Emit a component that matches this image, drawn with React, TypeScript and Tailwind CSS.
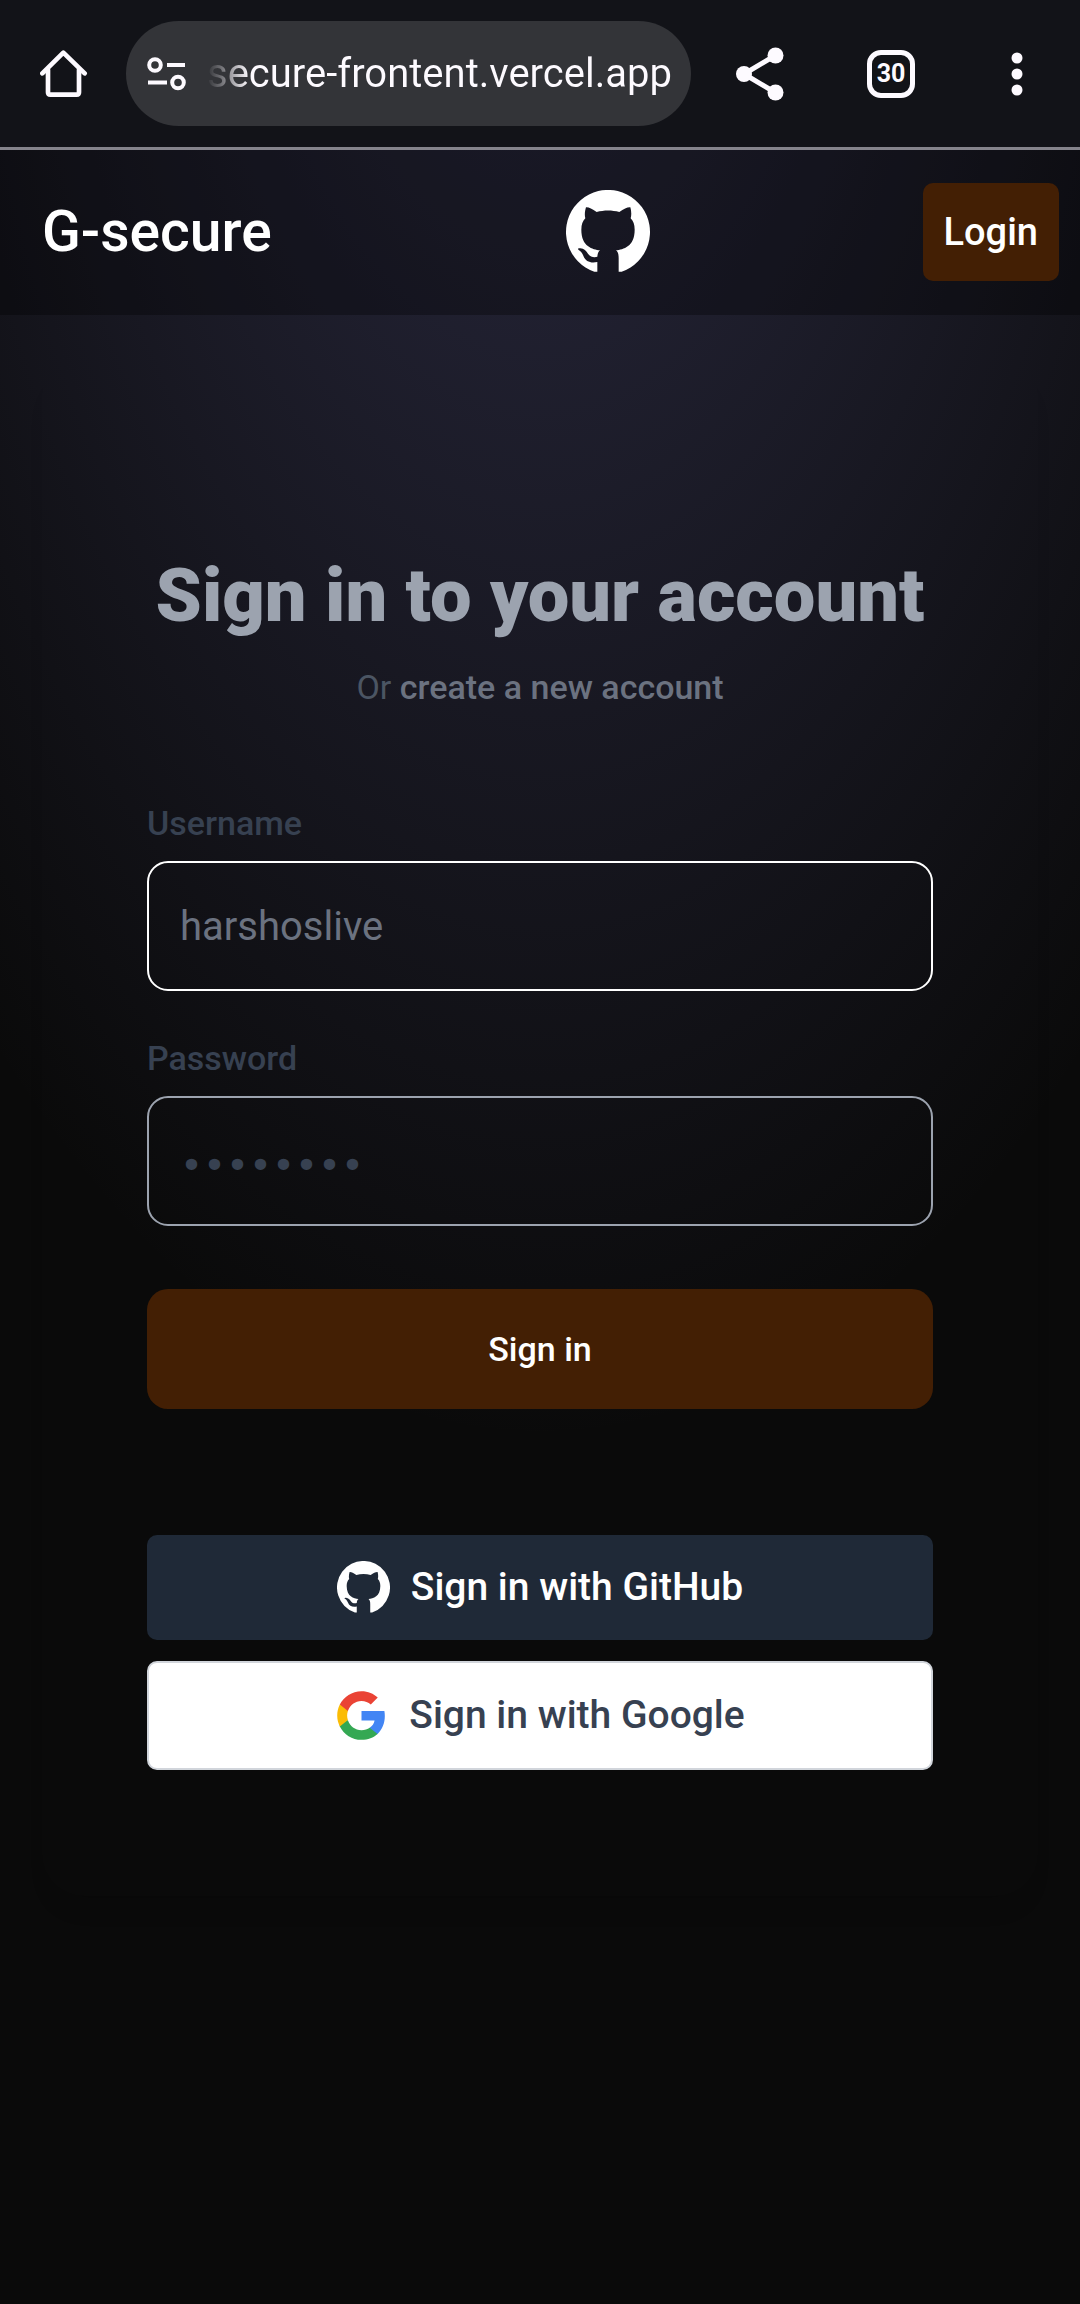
function HomeIcon() {
  return (
    <svg viewBox="30 29 144 144" className="size-12" fill="none" stroke="#fdfaff" strokeWidth="14" strokeLinecap="round" strokeLinejoin="round" aria-hidden="true">
      <path d="M37 99 100 37l64 62" />
      <path d="M54 88v68q0 7 7 7h79q7 0 7-7V88" />
    </svg>
  );
}

function TuneIcon() {
  return (
    <svg viewBox="0 0 40 34" className="h-[34px] w-10 shrink-0" fill="none" stroke="#fdfaff" strokeWidth="4" aria-hidden="true">
      <circle cx="8" cy="8" r="5.800" />
      <path d="M20 8h18M1 25.500h19" />
      <circle cx="31" cy="25.500" r="5.800" />
    </svg>
  );
}

function ShareIcon() {
  return (
    <svg viewBox="0 0 48 54" className="h-[54px] w-12" fill="#fdfaff" stroke="#fdfaff" aria-hidden="true">
      <path d="M40 8 8 27l32 19" fill="none" strokeWidth="5" />
      <circle cx="8" cy="27" r="8" stroke="none" />
      <circle cx="39.500" cy="8.500" r="8" stroke="none" />
      <circle cx="39.500" cy="45.500" r="8" stroke="none" />
    </svg>
  );
}

function MoreIcon() {
  return (
    <svg viewBox="0 0 12 44" className="h-11 w-3" fill="#fdfaff" aria-hidden="true">
      <circle cx="6" cy="6" r="5.500" />
      <circle cx="6" cy="22" r="5.500" />
      <circle cx="6" cy="38" r="5.500" />
    </svg>
  );
}

function GitHubMark({ className }: { className: string }) {
  return (
    <svg viewBox="18 17 252 252" className={className} fill="currentColor" aria-hidden="true">
      <path d="M112 262H103A126 126 0 1 1 185 262H176V222C176 210 174 203 168 198C190 195 224 187 224 136C224 120 220 110 212 102C215 92 214 79 211 69C203 68 192 73 178 83C156 77 132 77 110 83C96 73 85 68 78 69C75 79 73 92 76 102C68 110 64 120 64 136C64 187 98 195 120 198C115 202 113 207 112 217C104 220 91 219 84 208C79 200 72 193 61 192C53 191 52 195 57 198C63 201 67 208 70 214C77 232 92 237 112 233Z" />
    </svg>
  );
}

function GoogleIcon() {
  return (
    <svg viewBox="0 0 24 24" className="size-[53px]" aria-hidden="true">
      <path fill="#4285F4" d="M22.560 12.250c0-.78-.07-1.530-.2-2.250H12v4.260h5.920c-.26 1.370-1.040 2.530-2.210 3.310v2.770h3.570c2.080-1.920 3.280-4.740 3.280-8.090z" />
      <path fill="#34A853" d="M12 23c2.970 0 5.460-.98 7.280-2.660l-3.570-2.770c-.98.66-2.230 1.060-3.710 1.060-2.860 0-5.290-1.930-6.160-4.530H2.180v2.840C3.990 20.530 7.700 23 12 23z" />
      <path fill="#FBBC05" d="M5.840 14.090c-.22-.66-.35-1.360-.35-2.090s.13-1.430.35-2.090V7.070H2.180C1.430 8.550 1 10.220 1 12s.43 3.450 1.180 4.930l2.850-2.220.81-.62z" />
      <path fill="#EA4335" d="M12 5.380c1.620 0 3.060.56 4.210 1.640l3.150-3.150C17.450 2.090 14.970 1 12 1 7.700 1 3.990 3.470 2.180 7.070l3.660 2.840c.87-2.600 3.300-4.530 6.160-4.530z" />
    </svg>
  );
}

function BrowserBar() {
  return (
    <header className="flex h-[150px] items-center border-b-[3px] border-[#85848c] bg-[#121318] pr-[57px] pl-10">
      <button type="button" aria-label="Home">
        <HomeIcon />
      </button>
      <div className="ml-[38px] flex h-[105px] min-w-0 flex-1 items-center rounded-full bg-[#333438] pr-4 pl-[21px]">
        <button type="button" aria-label="Site settings">
          <TuneIcon />
        </button>
        <span className="ml-5 bg-linear-to-r from-[#333438] to-[#fdfaff] to-[9%] bg-clip-text text-[40px] whitespace-nowrap text-transparent">
          secure-frontent.vercel.app
        </span>
      </div>
      <button type="button" aria-label="Share" className="ml-[45px]">
        <ShareIcon />
      </button>
      <button
        type="button"
        aria-label="Open tabs"
        className="ml-[83px] flex size-12 items-center justify-center rounded-[14px] border-[5px] border-[#fdfaff] text-[25px] font-bold text-[#fdfaff]"
      >
        30
      </button>
      <button type="button" aria-label="More" className="ml-[96px]">
        <MoreIcon />
      </button>
    </header>
  );
}

function NavBar() {
  return (
    <nav className="flex h-[165px] items-center justify-between bg-black/30 pr-[21px] pb-px pl-[42px] text-white">
      <a href="#home" className="text-[57px] font-medium">
        G-secure
      </a>
      <a href="#github" aria-label="GitHub" className="pl-[21px]">
        <GitHubMark className="size-[84px]" />
      </a>
      <a
        href="#login"
        className="flex h-[98px] items-center rounded-[10px] bg-[#431f04] px-[21px] text-[38px] font-medium"
      >
        Login
      </a>
    </nav>
  );
}

function Field({ id, label, type, placeholder, className }: { id: string; label: string; type: string; placeholder: string; className: string }) {
  return (
    <div>
      <label htmlFor={id} className="block text-[34px] leading-[52px] font-medium text-[#374151]">
        {label}
      </label>
      <input
        id={id}
        type={type}
        placeholder={placeholder}
        className={`mt-3 block h-[130px] w-full rounded-[21px] border-2 bg-transparent px-[31px] outline-none ${className}`}
      />
    </div>
  );
}

export default function App() {
  return (
    <div className="flex min-h-screen flex-col bg-[#0a0a0a] font-['Roboto','Noto_Sans',sans-serif]">
      <BrowserBar />
      <div className="flex-1 bg-[radial-gradient(ellipse_80%_80%_at_50%_-20%,rgba(120,119,198,0.3),rgba(255,255,255,0))]">
        <NavBar />
        <main className="px-[42px] pt-[42px] pb-[168px]">
          <section className="rounded-[42px] px-[105px] pt-[192px] pb-[126px] shadow-[0_20px_24px_-12px_rgba(0,0,0,0.15)]">
            <h1 className="-mx-10 text-center text-[74px] leading-[94px] font-black text-[#9ca3af]">
              Sign in to your account
            </h1>
            <p className="mt-[18px] text-center text-[34px] leading-[52px] text-[#4b5563]">
              Or{" "}
              <a href="#register" className="font-medium text-[#6b7280]">
                create a new account
              </a>
            </p>
            <form className="mt-[84px]" onSubmit={(e) => e.preventDefault()}>
              <div className="flex flex-col gap-[41px]">
                <Field
                  id="username"
                  label="Username"
                  type="text"
                  placeholder="harshoslive"
                  className="border-white text-[40px] text-white placeholder:text-[#6b7280]"
                />
                <Field
                  id="password"
                  label="Password"
                  type="password"
                  placeholder="••••••••"
                  className="border-[#9ca3af] pt-2 font-['DejaVu_Sans',sans-serif] text-[39px] text-white placeholder:text-[#374151]"
                />
              </div>
              <button
                type="submit"
                className="mt-[63px] h-[120px] w-full rounded-[21px] bg-[#431f04] text-[34px] font-medium text-white"
              >
                Sign in
              </button>
            </form>
            <div className="mt-[126px] flex flex-col gap-[21px] text-[39px] font-medium">
              <button
                type="button"
                className="flex h-[105px] items-center justify-center gap-[21px] rounded-[10px] bg-[#1f2937] text-white"
              >
                <GitHubMark className="size-[53px]" />
                Sign in with GitHub
              </button>
              <button
                type="button"
                className="flex h-[109px] items-center justify-center gap-[21px] rounded-[10px] border-2 border-[#d1d5db] bg-white text-[#374151]"
              >
                <GoogleIcon />
                Sign in with Google
              </button>
            </div>
          </section>
        </main>
      </div>
    </div>
  );
}
